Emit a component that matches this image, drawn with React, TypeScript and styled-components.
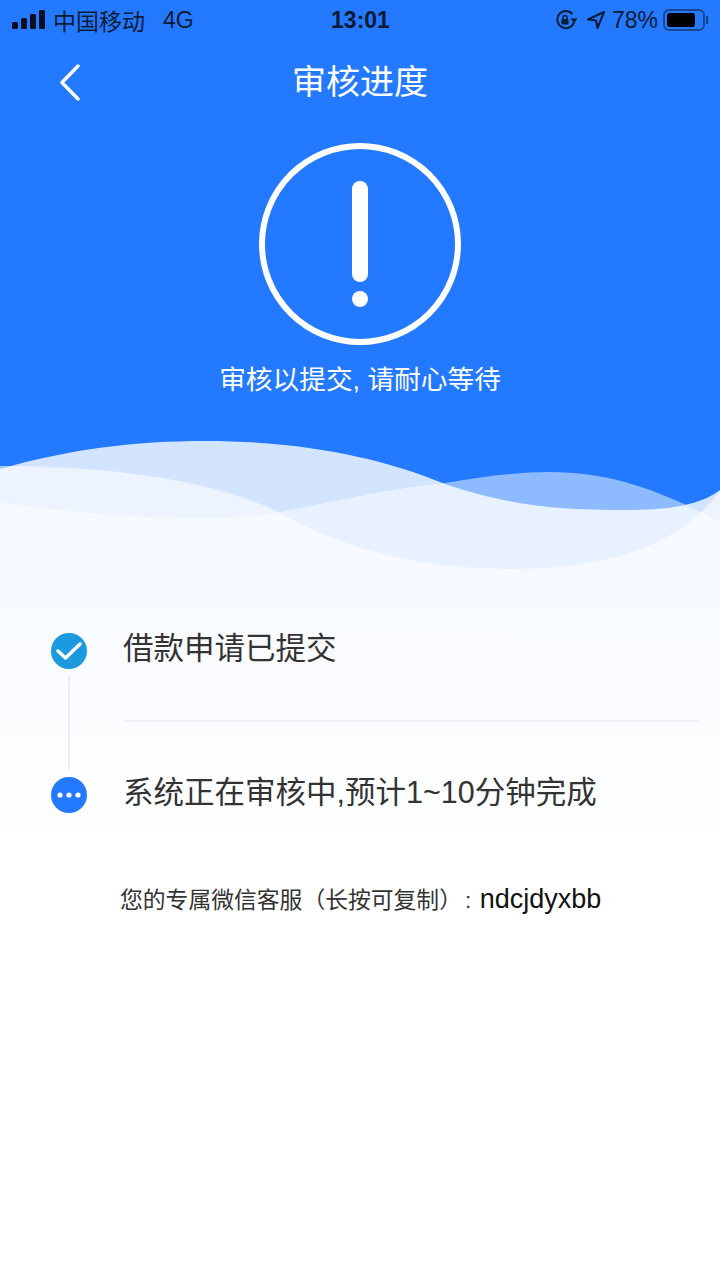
import React from "react";
import styled, { createGlobalStyle } from "styled-components";

const Global = createGlobalStyle`
  html, body { margin: 0; padding: 0; background: #fff; }
  #root { width: 720px; height: 1280px; overflow: hidden; }
`;
const FONT = `"Liberation Sans", "Noto Sans CJK SC", sans-serif`;

const Page = styled.div`
  width: 720px; height: 1280px; display: flex; flex-direction: column;
  font-family: ${FONT}; background: #fff;
`;
const Hero = styled.header`
  background: #2379ff; height: 430px; flex: none; display: flex; flex-direction: column; align-items: center;
`;
const StatusBar = styled.div`
  width: 100%; height: 40px; box-sizing: border-box; padding: 0 11px 0 12px;
  display: grid; grid-template-columns: 1fr auto 1fr; align-items: center; color: #0a1a33;
`;
const StatusLeft = styled.div`
  display: flex; align-items: center; font-size: 23px; gap: 8px; color: #0d1b33;
`;
const Net = styled.span` margin-left: 10px; `;
const Clock = styled.div` font-size: 23px; font-weight: 700; color: #0a1a33; `;
const StatusRight = styled.div`
  display: flex; align-items: center; justify-content: flex-end; gap: 6px; font-size: 23px; color: #0d1b33;
`;
const Battery = styled.svg` margin-left: -1px; `;
const NavBar = styled.div`
  width: 100%; height: 84px; display: flex; align-items: center; justify-content: center; position: relative;
  margin-top: -1px; padding-top: 1px;
`;
const BackIcon = styled.svg` position: absolute; left: 58px; top: 24px; `;
const Title = styled.h1`
  margin: 0; font-size: 34px; font-weight: 400; color: #fff; line-height: 1;
`;
const Alert = styled.svg` margin-top: 18px; flex: none; `;
const Message = styled.p`
  margin: 15px 0 0; font-size: 26.7px; line-height: 38px; color: #fff;
`;
const Wave = styled.svg` display: block; flex: none; `;
const Content = styled.main`
  flex: 1; background: linear-gradient(#f7faff 0, #ffffff 250px); padding: 14px 22px 0 51px;
  display: flex; flex-direction: column;
`;
const Steps = styled.ol` list-style: none; margin: 0; padding: 0; display: flex; flex-direction: column; `;
const Step = styled.li<{ $last?: boolean }>`
  display: flex; gap: 36px; height: ${(p) => (p.$last ? "72px" : "144px")};
`;
const Rail = styled.div`
  width: 36px; flex: none; display: flex; flex-direction: column; align-items: center; padding-top: 19px;
`;
const Dot = styled.div<{ $c: string }>`
  width: 36px; height: 36px; border-radius: 50%; background: ${(p) => p.$c}; flex: none;
  display: flex; align-items: center; justify-content: center;
`;
const Line = styled.div` width: 2px; height: 94px; flex: none; margin-top: 7px; background: #eaeef5; `;
const StepBody = styled.div<{ $last?: boolean }>`
  flex: 1; box-sizing: border-box; border-bottom: ${(p) => (p.$last ? "none" : "2px solid #eef1f6")};
  height: ${(p) => (p.$last ? "72px" : "108px")}; padding-top: 14px;
  font-size: 30.5px; line-height: 40px; color: #333;
`;
const Service = styled.p`
  margin: 53px 0 0 69px; font-size: 22.8px; line-height: 32px; color: #333; white-space: nowrap;
`;
const Colon = styled.span` margin-left: 3px; `;
const WeChat = styled.span` font-size: 27px; color: #111; margin-left: 2px; `;

export default function App() {
  return (
    <Page>
      <Global />
      <Hero>
        <StatusBar>
          <StatusLeft>
            <svg width="33" height="20" viewBox="0 0 33 20" fill="#060f20">
              <rect x="0" y="12" width="6" height="7" rx="1.5" />
              <rect x="9" y="8" width="6" height="11" rx="1.5" />
              <rect x="18" y="4" width="6" height="15" rx="1.5" />
              <rect x="27" y="0" width="6" height="19" rx="1.5" />
            </svg>
            <span>中国移动</span>
            <Net>4G</Net>
          </StatusLeft>
          <Clock>13:01</Clock>
          <StatusRight>
            <svg width="22" height="20" viewBox="0 0 22 20" fill="none" stroke="#0d1b33" strokeWidth="2">
              <path d="M16.5 4A8.6 8.6 0 1 0 18.4 11" />
              <path d="M14.5 8.5 H21.5 L18 13 Z" fill="#0d1b33" stroke="none" />
              <rect x="5.5" y="9" width="7" height="5.5" rx="1" fill="#0d1b33" stroke="none" />
              <path d="M7 9V7.5a2 2 0 0 1 4 0V9" strokeWidth="1.5" />
            </svg>
            <svg width="20" height="20" viewBox="0 0 20 20" fill="none" stroke="#0d1b33" strokeWidth="2" strokeLinejoin="round" style={{ marginLeft: 2 }}>
              <path d="M18 2 L2 9.5 L10 10.5 L11.5 18 Z" />
            </svg>
            <span>78%</span>
            <Battery width="46" height="22" viewBox="0 0 46 22" fill="none">
              <rect x="1" y="1" width="40" height="20" rx="5" stroke="#123a73" strokeWidth="1.5" />
              <rect x="4" y="4" width="28" height="14" rx="3" fill="#000" />
              <path d="M44 8v6" stroke="#123a73" strokeWidth="2" strokeLinecap="round" />
            </Battery>
          </StatusRight>
        </StatusBar>
        <NavBar>
          <BackIcon width="24" height="38" viewBox="0 0 24 38" fill="none" stroke="#fff" strokeWidth="3.4" strokeLinecap="round" strokeLinejoin="round">
            <path d="M20 3 L4 19.5 L20 36" />
          </BackIcon>
          <Title>审核进度</Title>
        </NavBar>
        <Alert width="204" height="204" viewBox="0 0 204 204" fill="none">
          <circle cx="102" cy="102" r="98" stroke="#fff" strokeWidth="6" />
          <rect x="94" y="39" width="16" height="101" rx="8" fill="#fff" />
          <circle cx="102" cy="157" r="8" fill="#fff" />
        </Alert>
        <Message>审核以提交, 请耐心等待</Message>
      </Hero>
      <Wave width="720" height="170" viewBox="0 430 720 170">
        <rect x="0" y="430" width="720" height="170" fill="#2379ff" />
        <path d="M0 469 C70 449 135 441 205 441 C300 441 380 457 445 484 C510 506 560 510 625 510 C670 510 700 505 720 490 V600 H0 Z" fill="#fff" fillOpacity="0.795" />
        <path d="M0 502 C70 512 130 518 200 518 C235 518 255 517 280 512 C340 500 395 488 445 483 C485 476 520 472 550 472 C610 472 660 490 720 522 V600 H0 Z" fill="#fff" fillOpacity="0.49" />
        <path d="M0 466 C110 466 215 480 280 513 C345 550 425 569 510 569 C610 569 680 545 720 491 V600 H0 Z" fill="#fff" fillOpacity="0.6" />
      </Wave>
      <Content>
        <Steps>
          <Step>
            <Rail>
              <Dot $c="#1b9ae0">
                <svg width="26" height="20" viewBox="0 0 26 20" fill="none" stroke="#fff" strokeWidth="3.4" strokeLinecap="round" strokeLinejoin="round">
                  <path d="M2 10 L9.5 17 L24 3" />
                </svg>
              </Dot>
              <Line />
            </Rail>
            <StepBody>借款申请已提交</StepBody>
          </Step>
          <Step $last>
            <Rail>
              <Dot $c="#2379ff">
                <svg width="24" height="6" viewBox="0 0 24 6" fill="#fff">
                  <circle cx="3" cy="3" r="2.6" />
                  <circle cx="12" cy="3" r="2.6" />
                  <circle cx="21" cy="3" r="2.6" />
                </svg>
              </Dot>
            </Rail>
            <StepBody $last>系统正在审核中,预计1~10分钟完成</StepBody>
          </Step>
        </Steps>
        <Service>您的专属微信客服（长按可复制）<Colon>:</Colon> <WeChat>ndcjdyxbb</WeChat></Service>
      </Content>
    </Page>
  );
}
